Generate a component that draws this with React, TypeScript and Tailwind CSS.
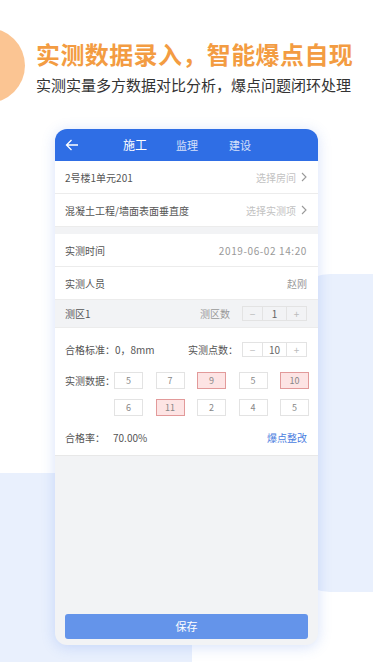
import React from "react";

const font = { fontFamily: '"Noto Sans CJK SC", "Noto Sans", sans-serif' };

function Chevron() {
  return (
    <svg width="6" height="10" viewBox="0 0 6 10" className="ml-[5px]">
      <polyline points="1,1 5,5 1,9" fill="none" stroke="#9a9a9a" strokeWidth="1.1" />
    </svg>
  );
}

function Stepper({ value }: { value: string }) {
  return (
    <div className="flex h-[15px] border border-[#e3e3e3] text-[10px] leading-none">
      <div className="w-[19px] flex items-center justify-center text-[#bbb]">−</div>
      <div className="w-[25px] flex items-center justify-center border-x border-[#e3e3e3] text-[#666]">{value}</div>
      <div className="w-[19px] flex items-center justify-center text-[#bbb]">+</div>
    </div>
  );
}

function Row({ label, value, chevron, muted, wide }: { label: string; value: string; chevron?: boolean; muted?: boolean; wide?: boolean }) {
  return (
    <div className="h-[33px] flex items-center justify-between pl-[10px] pr-[11px] bg-white border-b border-[#ececec]">
      <span className="text-[10px] text-[#555]">{label}</span>
      <span className="flex items-center">
        <span className={`text-[10px] ${muted ? "text-[#c2c2c2]" : "text-[#999]"} ${wide ? "tracking-[0.6px]" : ""}`}>{value}</span>
        {chevron && <Chevron />}
      </span>
    </div>
  );
}

const data = [
  { v: "5" }, { v: "7" }, { v: "9", bad: true }, { v: "5" }, { v: "10", bad: true },
  { v: "6" }, { v: "11", bad: true }, { v: "2" }, { v: "4" }, { v: "5" },
];

export default function App() {
  return (
    <div className="relative w-[373px] h-[662px] overflow-hidden bg-white" style={font}>
      {/* background decorations */}
      <div className="absolute left-[-50px] top-[28px] w-[75px] h-[75px] rounded-full bg-[#fbc593]" />
      <div className="absolute left-[290px] top-[274px] w-[140px] h-[318px] rounded-[40px] bg-[#e9f0fd]" />
      <div className="absolute left-0 top-[473px] w-[192px] h-[220px] bg-[#e9f0fd]" />

      <div className="relative pl-[36px] pt-[40px]">
        <h1 className="text-[24px] leading-[28px] font-bold text-[#f39c42] tracking-[0.4px]">实测数据录入，智能爆点自现</h1>
        <p className="mt-[7px] text-[15px] leading-[20px] text-[#333]">实测实量多方数据对比分析，爆点问题闭环处理</p>
      </div>

      <div className="relative ml-[55px] mt-[34px] w-[263px] h-[516px] rounded-[12px] overflow-hidden bg-[#f2f3f5] shadow-[0_2px_14px_rgba(70,120,230,0.22)] flex flex-col">
        <div className="h-[32px] bg-[#2f6ee5] flex items-center text-white shrink-0">
          <svg width="14" height="12" viewBox="0 0 14 12" className="ml-[10px]">
            <path d="M13 6H1.5M6.5 1L1.5 6l5 5" fill="none" stroke="#fff" strokeWidth="1.3" />
          </svg>
          <span className="ml-[44px] text-[12px]">施工</span>
          <span className="ml-[29px] text-[11px] text-white/80">监理</span>
          <span className="ml-[31px] text-[11px] text-white/80">建设</span>
        </div>

        <Row label="2号楼1单元201" value="选择房间" chevron muted />
        <Row label="混凝土工程/墙面表面垂直度" value="选择实测项" chevron muted />
        <div className="h-[7px] shrink-0" />
        <Row label="实测时间" value="2019-06-02 14:20" wide />
        <Row label="实测人员" value="赵刚" />

        <div className="h-[28px] flex items-center justify-between pl-[10px] pr-[11px] bg-[#f2f3f5] border-b border-[#ececec]">
          <span className="text-[10px] text-[#555]">测区1</span>
          <span className="flex items-center">
            <span className="text-[10px] text-[#999] mr-[12px]">测区数</span>
            <Stepper value="1" />
          </span>
        </div>

        <div className="bg-white pt-[14px] pb-[10px] pl-[10px] pr-[11px] border-b border-[#e8e8e8]">
          <div className="h-[15px] flex items-center justify-between">
            <span className="text-[10px] text-[#555]">合格标准：0，8mm</span>
            <span className="flex items-center">
              <span className="text-[10px] text-[#555] mr-[4px]">实测点数：</span>
              <Stepper value="10" />
            </span>
          </div>

          <div className="mt-[15px] flex">
            <div className="w-[49px] shrink-0 whitespace-nowrap h-[17px] flex items-center text-[10px] text-[#555]">实测数据：</div>
            <div className="grid grid-cols-[repeat(5,29px)] gap-x-[12.5px] gap-y-[10px]">
              {data.map((d, i) => (
                <div
                  key={i}
                  className={`h-[17px] flex items-center justify-center text-[9px] text-[#888] border ${
                    d.bad ? "bg-[#fde4e4] border-[#e29a9a]" : "bg-white border-[#e3e3e3]"
                  }`}
                >
                  {d.v}
                </div>
              ))}
            </div>
          </div>

          <div className="mt-[13px] h-[16px] flex items-center justify-between">
            <span className="flex items-center text-[10px] text-[#555]">
              <span className="w-[48px]">合格率：</span>
              <span>70.00%</span>
            </span>
            <span className="text-[10px] text-[#4a7de0]">爆点整改</span>
          </div>
        </div>

        <div className="flex-1" />
        <div className="mx-[10px] mb-[6px] h-[25px] rounded-[3px] bg-[#6494ea] flex items-center justify-center text-[11px] text-white">
          保存
        </div>
      </div>
    </div>
  );
}
